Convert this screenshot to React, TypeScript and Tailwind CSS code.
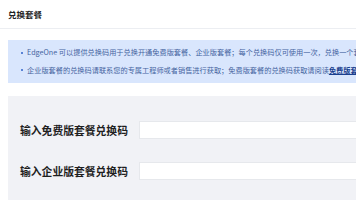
import React from "react";

export default function App() {
  const font = { fontFamily: '"Noto Sans CJK SC", "Noto Sans", sans-serif' };
  return (
    <div className="w-[356px] h-[200px] overflow-hidden bg-white" style={font}>
      <div className="h-[29px] border-b border-[#eceef2] flex items-center pl-[8px]">
        <span className="text-[8.5px] font-bold text-[#1f1f1f] leading-none">兑换套餐</span>
      </div>
      <div className="pl-[8px] pt-[11px]">
        <div className="w-[480px] h-[43px] bg-[#d9e6fd] pl-[13px] flex flex-col justify-center gap-[10px]">
          <div className="flex items-center whitespace-nowrap text-[7.2px] leading-none text-[#45649f]">
            <span className="w-[2px] h-[2px] rounded-full bg-[#2f62c9] mr-[4px]" />
            <span>EdgeOne 可以提供兑换码用于兑换开通免费版套餐、企业版套餐；每个兑换码仅可使用一次，兑换一个套餐。</span>
          </div>
          <div className="flex items-center whitespace-nowrap text-[7.2px] leading-none text-[#45649f]">
            <span className="w-[2px] h-[2px] rounded-full bg-[#2f62c9] mr-[4px]" />
            <span>企业版套餐的兑换码请联系您的专属工程师或者销售进行获取；免费版套餐的兑换码获取请阅读 </span>
            <span className="font-bold text-[#1a3f8f] underline">免费版套餐兑换说明</span>
          </div>
        </div>
      </div>
      <div className="pl-[8px] pt-[13px]">
        <div className="w-[480px] h-[120px] bg-[#f1f2f6] pl-[12px] pt-[25px] flex flex-col gap-[23px]">
          <div className="flex items-center h-[18px]">
            <span className="w-[119px] text-[10.8px] font-bold text-[#1f1f1f] leading-none">输入免费版套餐兑换码</span>
            <div className="w-[300px] h-[18px] bg-white border border-[#e6e8ec]" />
          </div>
          <div className="flex items-center h-[18px]">
            <span className="w-[119px] text-[10.8px] font-bold text-[#1f1f1f] leading-none">输入企业版套餐兑换码</span>
            <div className="w-[300px] h-[18px] bg-white border border-[#e6e8ec]" />
          </div>
        </div>
      </div>
    </div>
  );
}
